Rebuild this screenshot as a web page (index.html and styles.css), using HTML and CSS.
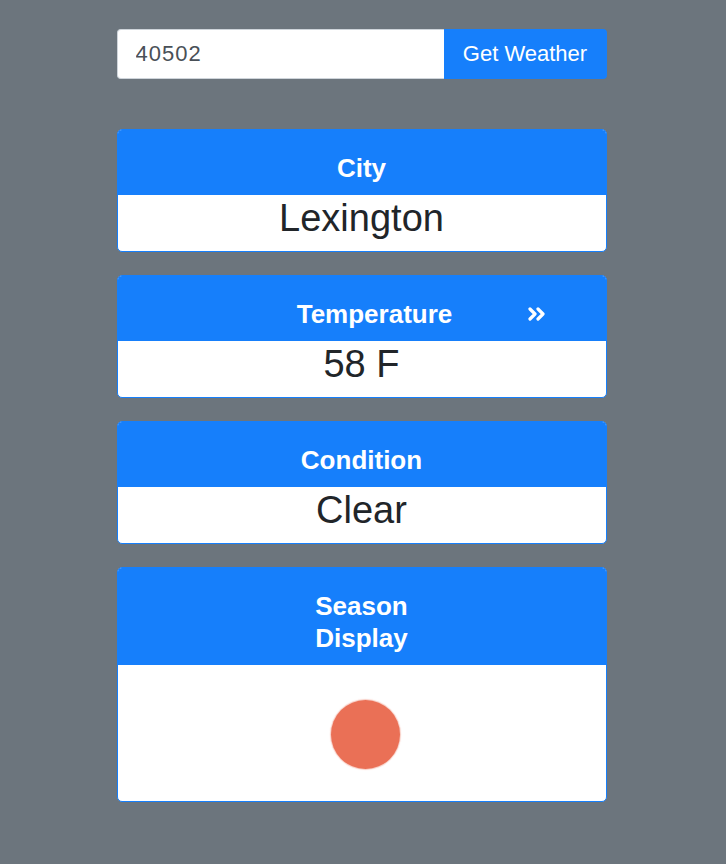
FILE: index.html
```html
<!DOCTYPE html>
<html>
<head>
<meta charset="utf-8">
<link rel="stylesheet" href="styles.css">
</head>
<body>
<div class="wrap">
  <form class="search">
    <input class="zip" type="text" value="40502">
    <button class="go" type="button">Get Weather</button>
  </form>

  <div class="cards">
    <div class="card">
      <div class="card-head">City</div>
      <div class="card-body">Lexington</div>
    </div>
    <div class="card">
      <div class="card-head head-split">
        <span>Temperature</span>
        <svg class="chev" width="18" height="14" viewBox="0 0 18 14"><polyline points="2,2 7,7 2,12" fill="none" stroke="#fff" stroke-width="3.2" stroke-linecap="round" stroke-linejoin="round"/><polyline points="10,2 15,7 10,12" fill="none" stroke="#fff" stroke-width="3.2" stroke-linecap="round" stroke-linejoin="round"/></svg>
      </div>
      <div class="card-body">58 F</div>
    </div>
    <div class="card">
      <div class="card-head">Condition</div>
      <div class="card-body">Clear</div>
    </div>
    <div class="card">
      <div class="card-head">Season<br>Display</div>
      <div class="card-body season">
        <div class="sun"></div>
      </div>
    </div>
  </div>
</div>
</body>
</html>
```

FILE: styles.css
```css
html, body {
  margin: 0;
  padding: 0;
}
body {
  background: #6c757d;
  font-family: "Liberation Sans", Arial, sans-serif;
  padding-right: 3px;
  min-height: 864px;
  box-sizing: border-box;
}
.wrap {
  width: 490px;
  margin: 0 auto;
  padding-top: 29px;
}
.search {
  display: flex;
  height: 50px;
  margin: 0;
}
.zip {
  flex: 1;
  min-width: 0;
  box-sizing: border-box;
  height: 50px;
  border: 1px solid #ced4da;
  border-right: none;
  border-radius: 4px 0 0 4px;
  background: #fff;
  padding: 0 18px;
  font-family: "Liberation Sans", Arial, sans-serif;
  font-size: 22px;
  letter-spacing: 1px;
  color: #495057;
  outline: none;
}
.go {
  width: 163px;
  height: 50px;
  border: none;
  border-radius: 0 4px 4px 0;
  background: #167ffb;
  color: #fff;
  font-family: "Liberation Sans", Arial, sans-serif;
  font-size: 22px;
  padding: 0;
}
.cards {
  margin-top: 50px;
  display: flex;
  flex-direction: column;
  gap: 23px;
}
.card {
  border: 1px solid #167ffb;
  border-radius: 5px;
  background: #fff;
  overflow: hidden;
}
.card-head {
  background: #167ffb;
  color: #fff;
  font-weight: 700;
  font-size: 26px;
  line-height: 32px;
  text-align: center;
  padding: 22px 0 11px;
}
.head-split {
  display: flex;
  justify-content: center;
  align-items: center;
  gap: 76px;
  padding-left: 120px;
}
.chev {
  display: block;
  margin-top: -1px;
}
.card-body {
  color: #212529;
  font-size: 38px;
  line-height: 46px;
  text-align: center;
  padding-bottom: 10px;
}
.season {
  display: flex;
  justify-content: center;
  padding: 35px 0 32px;
}
.sun {
  width: 69px;
  height: 69px;
  border-radius: 50%;
  background: #ea7056;
  margin-left: 7px;
  box-shadow: 0 0 1px 1px rgba(234, 112, 86, 0.35);
}
```
